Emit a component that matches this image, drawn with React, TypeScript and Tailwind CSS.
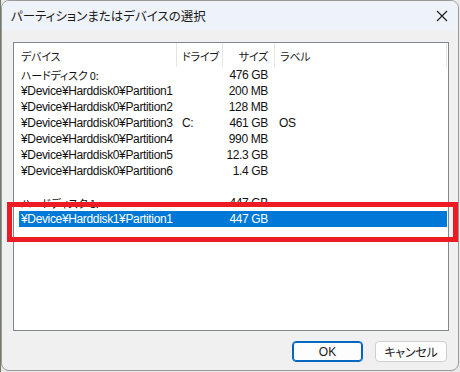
import React from "react"

type Row = { device: string; drive?: string; size?: string; label?: string; jp?: boolean; selected?: boolean }

const rows: Row[] = [
    { device: "ハードディスク 0:", size: "476 GB", jp: true },
    { device: "¥Device¥Harddisk0¥Partition1", size: "200 MB" },
    { device: "¥Device¥Harddisk0¥Partition2", size: "128 MB" },
    { device: "¥Device¥Harddisk0¥Partition3", drive: "C:", size: "461 GB", label: "OS" },
    { device: "¥Device¥Harddisk0¥Partition4", size: "990 MB" },
    { device: "¥Device¥Harddisk0¥Partition5", size: "12.3 GB" },
    { device: "¥Device¥Harddisk0¥Partition6", size: "1.4 GB" },
    { device: "" },
    { device: "ハードディスク 1:", size: "447 GB", jp: true },
    { device: "¥Device¥Harddisk1¥Partition1", size: "447 GB", selected: true },
]

const latin = "font-['Liberation_Sans','Noto_Sans_CJK_JP',sans-serif] text-[12px] tracking-[-0.35px]"
const jp = "font-['Noto_Sans_CJK_JP',sans-serif] text-[11px] tracking-[-0.2px] [font-feature-settings:'palt']"

const App: React.FC = () => {
    return (
        <div className="w-[460px] h-[372px] bg-[#e9e9e9] border-l border-[#6c7d68] overflow-hidden">
            <div className="relative w-[458px] h-[371px] flex flex-col rounded-[8px] border border-[#9a9a9a] bg-[#f0f0f0] overflow-hidden">
                {/* title bar */}
                <div className="h-[30px] shrink-0 flex items-center justify-between bg-[#eef2f9] pl-[9px] pr-[9px]">
                    <span className="font-['Noto_Sans_CJK_JP',sans-serif] text-[12.5px] text-[#1a1a1a] [font-feature-settings:'palt'] leading-none">
                        パーティションまたはデバイスの選択
                    </span>
                    <svg width="12" height="12" viewBox="0 0 12 12" className="mr-[1px]">
                        <path d="M1 1L11 11M11 1L1 11" stroke="#1a1a1a" strokeWidth="1.1" fill="none" />
                    </svg>
                </div>

                {/* list box */}
                <div className="mt-[11px] ml-[11px] w-[436px] h-[289px] border border-[#828790] bg-white flex flex-col pl-[5px]">
                    <div className={`h-[24px] flex text-[#1a1a1a] ${jp}`}>
                        <div className="w-[158px] pl-[2px] pt-[5px] border-r border-[#e5e5e5]">デバイス</div>
                        <div className="w-[46px] pl-[5px] pt-[5px] border-r border-[#e5e5e5]">ドライブ</div>
                        <div className="w-[52px] pr-[6px] pt-[5px] text-right border-r border-[#e5e5e5]">サイズ</div>
                        <div className="flex-1 pl-[5px] pt-[5px] border-r border-[#e5e5e5] mr-[1px]">ラベル</div>
                    </div>
                    {rows.map((r, i) => (
                        <div
                            key={i}
                            className={`h-[16px] flex items-center mr-[1px] ${r.selected ? "bg-[#0078d7] text-white" : "text-[#111]"} ${latin} leading-none`}>
                            <div className={`w-[158px] pl-[2px] ${r.selected ? "pl-[1px]" : ""} ${r.jp ? jp : ""} whitespace-nowrap`}>{r.device}</div>
                            <div className="w-[46px] pl-[5px]">{r.drive}</div>
                            <div className="w-[52px] pr-[7px] text-right whitespace-nowrap">{r.size}</div>
                            <div className="flex-1 pl-[4px]">{r.label}</div>
                        </div>
                    ))}
                </div>

                {/* buttons */}
                <div className="flex justify-end gap-[12px] mt-[10px] mr-[11px]">
                    <button className="w-[71px] h-[21px] rounded-[4px] border border-[#0067c0] shadow-[inset_0_0_0_1px_#0067c0] bg-[#fdfdfd] font-['Liberation_Sans',sans-serif] text-[12px] text-[#1a1a1a]">
                        OK
                    </button>
                    <button className={`w-[72px] h-[21px] rounded-[4px] border border-[#d0d0d0] bg-[#fdfdfd] text-[#1a1a1a] ${jp} text-[12px]`}>
                        キャンセル
                    </button>
                </div>

                {/* red highlight annotation */}
                <div className="absolute left-[5px] top-[201px] w-[451px] h-[40px] border-[5px] border-[#ed1c24] pointer-events-none" />
            </div>
        </div>
    )
}

export default App
